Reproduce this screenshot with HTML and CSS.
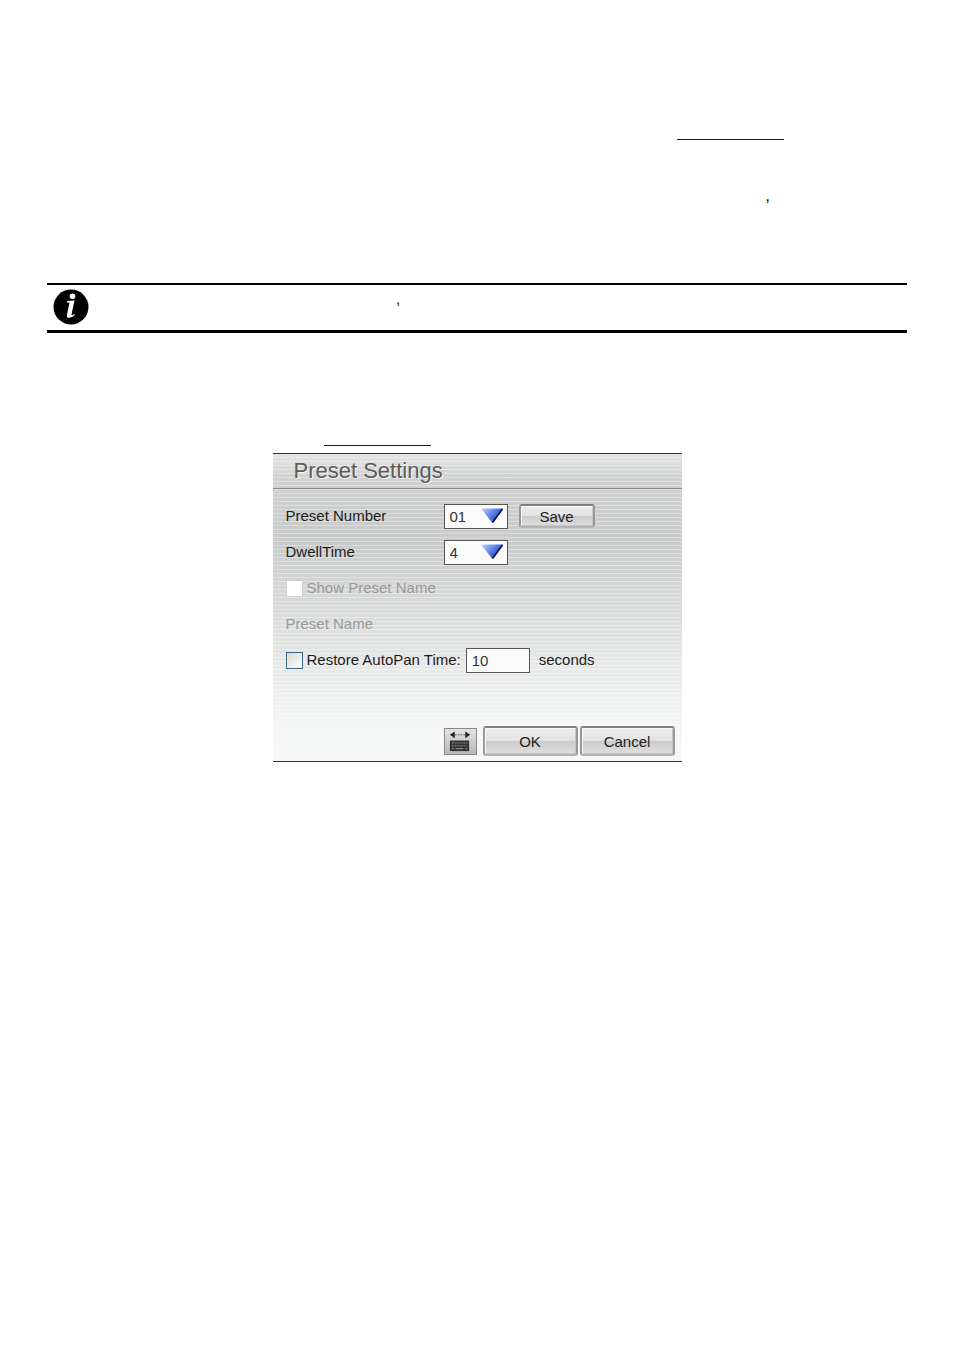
FILE: index.html
```html
<!DOCTYPE html>
<html lang="en">
<head>
    <meta charset="UTF-8">
    <meta name="viewport" content="width=device-width, initial-scale=1.0">
    <title>Preset Settings</title>
    <link rel="stylesheet" href="styles.css">
</head>
<body>
    <div class="page">
        <a class="ref-link ref-link-right" href="#preset" aria-label="Preset settings"></a>
        <p class="text-line">,</p>

        <div class="note">
            <svg class="note-icon" viewBox="0 0 36 36" aria-hidden="true">
                <circle cx="18" cy="18" r="17.5" fill="#000"/>
                <circle cx="19.5" cy="7.2" r="2.8" fill="#fff"/>
                <path d="M14 12 L21.5 11.5 L18.5 25.5 Q18.5 27 21.5 25 L21.5 26.5 Q17 29.5 14.5 28.5 Q13.5 28 14 25.5 L16.5 13.7 L14 13.5 Z" fill="#fff"/>
            </svg>
            <p>,</p>
        </div>

        <a class="ref-link ref-link-left" href="#preset" aria-label="Preset settings"></a>

        <form class="dialog" id="preset">
            <h1>Preset Settings</h1>
            <div class="fields">
                <div class="row">
                    <label class="name" for="presetNumber">Preset Number</label>
                    <div class="select-box">
                        <select id="presetNumber"><option>01</option></select>
                        <svg class="arrow" viewBox="0 0 23 16" aria-hidden="true">
                            <defs>
                                <linearGradient id="blue" x1="0" y1="0" x2="1" y2="0.6">
                                    <stop offset="0" stop-color="#c4d6ff"/>
                                    <stop offset="0.7" stop-color="#3f66dc"/>
                                </linearGradient>
                            </defs>
                            <path d="M0 0.5 H22 L11.5 15 Z" fill="url(#blue)"/>
                            <path d="M21.5 1 L11.5 14.5" stroke="#0a0f3c" stroke-width="1.6"/>
                        </svg>
                    </div>
                    <button type="button" class="save">Save</button>
                </div>
                <div class="row">
                    <label class="name" for="dwellTime">DwellTime</label>
                    <div class="select-box">
                        <select id="dwellTime"><option>4</option></select>
                        <svg class="arrow" viewBox="0 0 23 16" aria-hidden="true">
                            <path d="M0 0.5 H22 L11.5 15 Z" fill="url(#blue)"/>
                            <path d="M21.5 1 L11.5 14.5" stroke="#0a0f3c" stroke-width="1.6"/>
                        </svg>
                    </div>
                </div>
                <div class="row disabled">
                    <input type="checkbox" id="showName" disabled>
                    <label for="showName">Show Preset Name</label>
                </div>
                <div class="row disabled">
                    <span>Preset Name</span>
                </div>
                <div class="row">
                    <input type="checkbox" id="restore">
                    <label for="restore">Restore AutoPan Time:</label>
                    <input type="text" id="seconds" value="10">
                    <label for="seconds">seconds</label>
                </div>
            </div>
            <div class="actions">
                <button type="button" class="keyboard" aria-label="Keyboard">
                    <svg viewBox="0 0 32 26" aria-hidden="true">
                        <path d="M5 6 L10 2.5 V9.5 Z M26 6 L21 2.5 V9.5 Z" fill="#222"/>
                        <path d="M10 6 H21" stroke="#555" stroke-dasharray="2 1"/>
                        <rect x="5" y="12" width="20" height="11" fill="#333"/>
                        <path d="M7 14.5 H23 M7 17.5 H23" stroke="#999" stroke-dasharray="2 1"/>
                        <path d="M7 20.5 H9 M11 20.5 H19 M21 20.5 H23" stroke="#999"/>
                    </svg>
                </button>
                <button type="button">OK</button>
                <button type="button">Cancel</button>
            </div>
        </form>
    </div>
</body>
</html>
```
FILE: styles.css
```css
* {
    box-sizing: border-box;
}

body {
    margin: 0;
    background: #fff;
    color: #1c1c1c;
    font-family: "Liberation Sans", Arial, sans-serif;
    font-size: 15px;
}

.page {
    padding: 138px 47px 60px;
}

.ref-link {
    display: block;
    width: 107px;
    height: 2px;
    border-bottom: 1px solid #0000e0;
}

.ref-link-right {
    margin: 0 123px 0 auto;
}

.ref-link-left {
    margin: 111px 0 7px 277px;
}

.text-line {
    margin: 46px 137px 0 0;
    font-size: 17px;
    line-height: 20px;
    text-align: right;
    color: #000;
}

.note {
    display: flex;
    align-items: flex-start;
    gap: 307px;
    height: 50px;
    margin-top: 77px;
    padding: 4px 0 0 6px;
    border-top: 2px solid #000;
    border-bottom: 3px solid #000;
    color: #000;
}

.note p {
    margin: 0;
    line-height: 20px;
}

.note-icon {
    width: 36px;
    height: 36px;
}

.dialog {
    width: 100%;
    max-width: 409px;
    margin: 0 auto;
    border-top: 1px solid #333;
    border-bottom: 1px solid #333;
    background:
        repeating-linear-gradient(transparent 0 3px, rgba(255, 255, 255, 0.35) 3px 4px),
        linear-gradient(#e2e3e3, #cfd0d0 8%, #c9cbcb 28%, #dcdede 55%, #e8eaea 70%, #f4f5f5 88%, #f6f7f7);
}

.dialog h1 {
    margin: 0;
    padding-left: 21px;
    border-bottom: 1px solid #888;
    color: #5c5c5c;
    font-size: 22px;
    font-weight: normal;
    line-height: 34px;
    text-shadow: 1px 1px 0 #f4f4f4;
}

.fields {
    padding: 9px 13px 0;
}

.row {
    display: flex;
    align-items: center;
    height: 36px;
}

.row label,
.row span {
    padding-bottom: 2px;
}

.name {
    width: 158px;
}

.disabled {
    color: #999;
}

.select-box {
    position: relative;
    width: 64px;
    height: 25px;
}

select,
input[type="text"] {
    appearance: none;
    width: 64px;
    height: 25px;
    margin: 0;
    padding: 0 5px;
    border: 1px solid #555;
    border-radius: 0;
    background: #fafafa;
    color: #333;
    font: inherit;
}

input[type="text"] {
    margin: 0 9px 0 5px;
}

.arrow {
    position: absolute;
    top: 4px;
    right: 4px;
    width: 23px;
    height: 16px;
    pointer-events: none;
}

input[type="checkbox"] {
    appearance: none;
    width: 17px;
    height: 17px;
    margin: 0 4px 0 0;
    border: 1px solid #3d6587;
    background: linear-gradient(135deg, #d8d8d4, #fff);
}

input[type="checkbox"]:disabled {
    border-color: #d0d0c8;
    background: #fff;
}

button {
    width: 95px;
    height: 30px;
    padding: 0;
    border: 2px solid #888;
    border-color: #808080 #999 #b4b4b4 #999;
    border-radius: 3px;
    background: linear-gradient(#eee, #e2e2e2 48%, #cbcbcb 52%, #e0e0e0);
    box-shadow: inset 1px 1px 0 #fafafa, inset -1px -1px 0 #c4c4c4;
    color: #222;
    font: inherit;
}

.save {
    width: 76px;
    height: 24px;
    margin-left: 11px;
}

.actions {
    display: flex;
    justify-content: flex-end;
    align-items: center;
    gap: 2px;
    padding: 48px 7px 5px;
}

.keyboard {
    width: 33px;
    height: 27px;
    margin-right: 4px;
    border: 1px solid #888;
    border-radius: 0;
    background: linear-gradient(#e4e4e4, #b8b8b8);
    box-shadow: none;
}

.keyboard svg {
    display: block;
    width: 100%;
    height: 100%;
}
```
